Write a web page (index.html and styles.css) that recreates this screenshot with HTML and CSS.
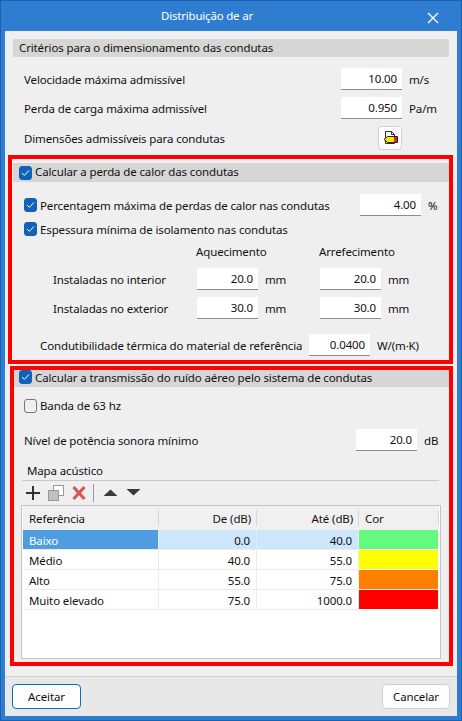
FILE: index.html
```html
<!DOCTYPE html>
<html lang="pt">

<head>
    <meta charset="UTF-8">
    <meta name="viewport" content="width=device-width, initial-scale=1.0">
    <title>Distribuição de ar</title>
    <link rel="stylesheet" href="styles.css">
</head>

<body>

    <div class="window">
        <div class="titlebar">
            <span class="title">Distribuição de ar</span>
            <svg class="close" width="12" height="12" viewBox="0 0 12 12">
                <path d="M1 1L11 11M11 1L1 11" stroke="#fff" stroke-width="1.4" fill="none" />
            </svg>
        </div>

        <div class="content">
            <div class="criteria">
                <div class="section-head"><span class="head-text">Critérios para o dimensionamento das condutas</span></div>
                <div class="row row-first">
                    <span class="label">Velocidade máxima admissível</span>
                    <div class="field">10.00</div>
                    <span class="unit unit-wide">m/s</span>
                </div>
                <div class="row">
                    <span class="label">Perda de carga máxima admissível</span>
                    <div class="field">0.950</div>
                    <span class="unit unit-wide">Pa/m</span>
                </div>
                <div class="row row-button">
                    <span class="label">Dimensões admissíveis para condutas</span>
                    <button type="button" class="icon-button">
                        <svg width="18" height="18" viewBox="0 0 18 18">
                            <path d="M4.5 2.5H10.5L13.5 5.5V14.5H4.5Z" fill="#fff" stroke="#333" stroke-width="1" />
                            <path d="M10.5 2.5V5.5H13.5" fill="none" stroke="#333" stroke-width="1" />
                            <path d="M6.5 7.5H16.5V13.5H6.5L3 10.5Z" fill="#ffe600" stroke="#222" stroke-width="1" />
                            <rect x="13" y="8" width="3" height="5" fill="#e8202a" />
                        </svg>
                    </button>
                </div>
            </div>

            <div class="marked marked-heat">
                <div class="section-head check-head">
                    <span class="check checked"><svg width="9" height="8" viewBox="0 0 9 8"><path d="M1 4L3.4 6.4L8 1.4" fill="none" stroke="#fff" stroke-width="1" /></svg></span>
                    <span class="head-text">Calcular a perda de calor das condutas</span>
                </div>
                <div class="row row-max">
                    <span class="check checked"><svg width="9" height="8" viewBox="0 0 9 8"><path d="M1 4L3.4 6.4L8 1.4" fill="none" stroke="#fff" stroke-width="1" /></svg></span>
                    <span class="label">Percentagem máxima de perdas de calor nas condutas</span>
                    <div class="field">4.00</div>
                    <span class="unit unit-small">%</span>
                </div>
                <div class="row row-thick">
                    <span class="check checked"><svg width="9" height="8" viewBox="0 0 9 8"><path d="M1 4L3.4 6.4L8 1.4" fill="none" stroke="#fff" stroke-width="1" /></svg></span>
                    <span class="label">Espessura mínima de isolamento nas condutas</span>
                </div>
                <div class="thick-grid">
                    <span></span>
                    <span class="col-head">Aquecimento</span>
                    <span class="col-head">Arrefecimento</span>

                    <span>Instaladas no interior</span>
                    <div class="pair"><div class="field">20.0</div><span>mm</span></div>
                    <div class="pair"><div class="field">20.0</div><span>mm</span></div>

                    <span>Instaladas no exterior</span>
                    <div class="pair"><div class="field">30.0</div><span>mm</span></div>
                    <div class="pair"><div class="field">30.0</div><span>mm</span></div>
                </div>
                <div class="row row-cond">
                    <span class="label">Condutibilidade térmica do material de referência</span>
                    <div class="field">0.0400</div>
                    <span class="unit unit-cond">W/(m·K)</span>
                </div>
            </div>

            <div class="marked marked-noise">
                <div class="section-head check-head noise-head">
                    <span class="check checked"><svg width="9" height="8" viewBox="0 0 9 8"><path d="M1 4L3.4 6.4L8 1.4" fill="none" stroke="#fff" stroke-width="1" /></svg></span>
                    <span class="head-text">Calcular a transmissão do ruído aéreo pelo sistema de condutas</span>
                </div>
                <div class="row row-band">
                    <span class="check"></span>
                    <span class="label">Banda de 63 hz</span>
                </div>
                <div class="row row-level">
                    <span class="label">Nível de potência sonora mínimo</span>
                    <div class="field">20.0</div>
                    <span class="unit unit-db">dB</span>
                </div>
                <div class="map-title">Mapa acústico</div>
                <div class="toolbar">
                    <svg width="16" height="16" viewBox="0 0 16 16"><path d="M8 1V15M1 8H15" stroke="#333" stroke-width="2" fill="none" /></svg>
                    <svg class="tool-copy" width="17" height="17" viewBox="0 0 17 17">
                        <rect x="6.5" y="0.5" width="10" height="10" fill="#fff" stroke="#999" />
                        <rect x="1.5" y="5.5" width="10" height="10" fill="#c0c0c0" stroke="#999" />
                    </svg>
                    <svg class="tool-delete" width="16" height="16" viewBox="0 0 16 16"><path d="M2.5 2L13.5 14M13.5 2L2.5 14" stroke="#d9534f" stroke-width="3" fill="none" /></svg>
                    <span class="tool-sep"></span>
                    <svg class="tool-up" width="15" height="8" viewBox="0 0 15 8"><path d="M7.5 0.5L14.5 7H0.5Z" fill="#3a3a3a" /></svg>
                    <svg class="tool-down" width="15" height="8" viewBox="0 0 15 8"><path d="M0.5 1H14.5L7.5 7.5Z" fill="#3a3a3a" /></svg>
                </div>
                <div class="table-wrap">
                    <table class="grid">
                        <thead>
                            <tr>
                                <th class="col-ref">Referência</th>
                                <th class="col-num col-from">De (dB)</th>
                                <th class="col-num col-to">Até (dB)</th>
                                <th class="col-color">Cor</th>
                            </tr>
                        </thead>
                        <tbody>
                            <tr class="selected">
                                <td class="col-ref">Baixo</td>
                                <td class="col-num">0.0</td>
                                <td class="col-num">40.0</td>
                                <td class="swatch swatch-green"></td>
                            </tr>
                            <tr>
                                <td class="col-ref">Médio</td>
                                <td class="col-num">40.0</td>
                                <td class="col-num">55.0</td>
                                <td class="swatch swatch-yellow"></td>
                            </tr>
                            <tr>
                                <td class="col-ref">Alto</td>
                                <td class="col-num">55.0</td>
                                <td class="col-num">75.0</td>
                                <td class="swatch swatch-orange"></td>
                            </tr>
                            <tr>
                                <td class="col-ref">Muito elevado</td>
                                <td class="col-num">75.0</td>
                                <td class="col-num">1000.0</td>
                                <td class="swatch swatch-red"></td>
                            </tr>
                        </tbody>
                    </table>
                </div>
            </div>

            <div class="footer">
                <button type="button" class="btn btn-primary">Aceitar</button>
                <button type="button" class="btn">Cancelar</button>
            </div>
        </div>
    </div>

</body>

</html>
```

FILE: styles.css
```css
* {
    box-sizing: border-box;
}

body {
    margin: 0;
    font-family: 'Noto Sans', sans-serif;
    font-size: 11.5px;
    letter-spacing: -0.13px;
    color: #111;
    background-color: #2f7dd0;
}

.window {
    width: 462px;
    height: 721px;
    display: flex;
    flex-direction: column;
    padding: 0 5px 5px;
    background-color: #2f7dd0;
    box-shadow: inset 0 0 0 1px #1a62b0;
}

.titlebar {
    height: 31px;
    flex-shrink: 0;
    display: flex;
    align-items: center;
    justify-content: center;
    padding-right: 48px;
    position: relative;
    color: #fff;
    letter-spacing: -0.2px;
}

.close {
    position: absolute;
    right: 18px;
    top: 12px;
}

.content {
    flex: 1;
    display: flex;
    flex-direction: column;
    background-color: #efefef;
}

.criteria {
    margin: 8px 8px 0;
    height: 112px;
}

.section-head {
    height: 18px;
    display: flex;
    align-items: center;
    padding-left: 6px;
    background-color: #d6d6d6;
}

.head-text {
    margin-top: -2px;
}

.row {
    display: flex;
    align-items: center;
    height: 22px;
    margin-top: 7px;
    padding-left: 11px;
    white-space: nowrap;
}

.row-first {
    margin-top: 11px;
}

.row-button {
    height: 24px;
}

.label {
    flex: 1;
}

.field {
    width: 61px;
    height: 22px;
    flex-shrink: 0;
    padding: 2px 5px 0 0;
    text-align: right;
    line-height: 17px;
    background-color: #fff;
    border-bottom: 1px solid #8c8c8c;
}

.unit {
    margin-left: 7px;
}

.unit-wide {
    width: 40px;
}

.icon-button {
    width: 24px;
    height: 24px;
    margin-right: 47px;
    padding: 2px;
    display: flex;
    align-items: center;
    justify-content: center;
    background-color: #fff;
    border: 1px solid #d0d0d0;
    border-radius: 4px;
}

.marked {
    border: 4px solid #ff0000;
    flex-shrink: 0;
}

.marked-heat {
    height: 209px;
    margin: 4px 4px 0 3px;
    padding: 4px 0 0 1px;
}

.marked-noise {
    height: 300px;
    margin: 2px 4px 0 5px;
}

.check-head {
    height: 19px;
    gap: 3px;
    padding-left: 6px;
}

.noise-head {
    height: 17px;
    padding-left: 5px;
}

.noise-head .check {
    margin-top: -3px;
}

.check {
    width: 13px;
    height: 14px;
    flex-shrink: 0;
    display: flex;
    align-items: center;
    justify-content: center;
    border: 1px solid #777;
    border-radius: 3px;
}

.check.checked {
    background-color: #0f62b8;
    border-color: #0f62b8;
}

.row .check {
    margin-right: 3px;
}

.row-max {
    margin-top: 12px;
}

.unit-small {
    width: 21px;
}

.row-thick {
    margin-top: 2px;
}

.thick-grid {
    display: grid;
    grid-template-columns: 144px 123px 1fr;
    grid-template-rows: 19px 22px 22px;
    row-gap: 7px;
    align-items: center;
    margin-top: 2px;
    padding-left: 40px;
}

.col-head {
    margin-left: -1px;
}

.pair {
    display: flex;
    align-items: center;
    gap: 7px;
}

.row-cond {
    margin-top: 15px;
    padding-left: 27px;
}

.unit-cond {
    width: 72px;
}

.row-band {
    margin-top: 12px;
    height: 14px;
    padding-left: 10px;
}

.row-band .label {
    margin-top: -2px;
}

.row-level {
    margin-top: 16px;
    padding-left: 10px;
}

.unit-db {
    width: 25px;
}

.map-title {
    height: 30px;
    margin: 0 10px 0 8px;
    padding: 11px 0 0 5px;
    line-height: 17px;
    border-bottom: 1px solid #c8c8c8;
}

.toolbar {
    height: 24px;
    display: flex;
    align-items: center;
    gap: 6px;
    padding-left: 11px;
}

.tool-delete {
    margin-left: 1px;
}

.tool-sep {
    width: 1px;
    height: 18px;
    background-color: #999;
}

.tool-up {
    margin: 0 0 0 3px;
}

.tool-down {
    margin: -2px 0 0 2px;
}

.table-wrap {
    height: 154px;
    margin: 0 8px 0 7px;
    background-color: #fff;
    border: 1px solid #c4c4c4;
    padding: 0 1px;
}

.grid {
    width: 100%;
    border-collapse: separate;
    border-spacing: 0;
    table-layout: fixed;
}

/* header separators stop short of the cell edges */
.grid th {
    height: 24px;
    font-weight: normal;
    background: linear-gradient(#d8d8d8, #d8d8d8) right center / 1px 16px no-repeat #f0f0f0;
    padding: 1px 6px 0;
}

.grid td {
    height: 20px;
    padding: 1px 6px 0;
    border-right: 1px solid #ececec;
    border-bottom: 1px solid #ececec;
}

.col-ref {
    width: 136px;
    text-align: left;
}

.col-from {
    width: 98px;
}

.col-to {
    width: 102px;
}

.col-num {
    text-align: right;
}

.col-color {
    text-align: left;
}

.selected .col-ref {
    background-color: #4d9de0;
    color: #fff;
}

.selected .col-num {
    background-color: #cce6fb;
}

.grid .swatch {
    border-right-color: #fff;
    border-bottom-color: #fff;
}

.swatch-green {
    background-color: #66f97f;
}

.swatch-yellow {
    background-color: #ffff00;
}

.swatch-orange {
    background-color: #ff8000;
}

.swatch-red {
    background-color: #ff0000;
}

.footer {
    flex: 1;
    display: flex;
    align-items: center;
    justify-content: space-between;
    margin-top: 10px;
    padding: 0 7px;
    background-color: #e8e8e8;
    border-top: 1px solid #cfcfcf;
}

.btn {
    width: 68px;
    height: 25px;
    font-family: inherit;
    font-size: 11.5px;
    letter-spacing: inherit;
    color: #111;
    background-color: #fdfdfd;
    border: 1px solid #cfcfcf;
    border-radius: 4px;
}

.btn-primary {
    width: 69px;
    border-color: #0f6cbd;
}
```
